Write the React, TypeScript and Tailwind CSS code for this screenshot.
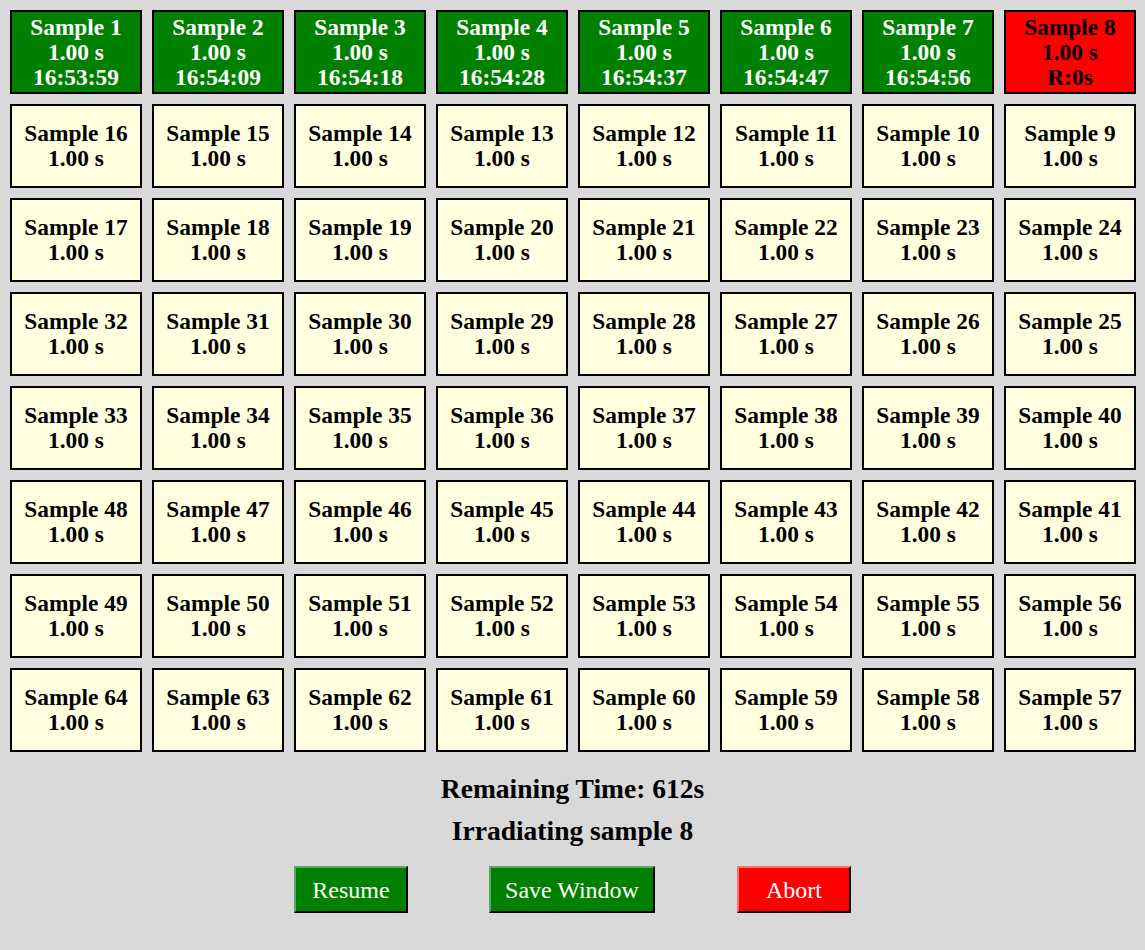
const ORDER: number[][] = [
  [1, 2, 3, 4, 5, 6, 7, 8],
  [16, 15, 14, 13, 12, 11, 10, 9],
  [17, 18, 19, 20, 21, 22, 23, 24],
  [32, 31, 30, 29, 28, 27, 26, 25],
  [33, 34, 35, 36, 37, 38, 39, 40],
  [48, 47, 46, 45, 44, 43, 42, 41],
  [49, 50, 51, 52, 53, 54, 55, 56],
  [64, 63, 62, 61, 60, 59, 58, 57],
];

const DONE: Record<number, string> = {
  1: "16:53:59",
  2: "16:54:09",
  3: "16:54:18",
  4: "16:54:28",
  5: "16:54:37",
  6: "16:54:47",
  7: "16:54:56",
};

const CURRENT = 8;

function Cell({ n }: { n: number }) {
  const done = DONE[n];
  const active = n === CURRENT;
  const color = done
    ? "bg-[#008000] text-white"
    : active
    ? "bg-[#ff0000] text-black"
    : "bg-[#ffffe0] text-black";
  return (
    <div
      className={`flex h-[84px] flex-col items-center justify-center border-2 border-black text-center text-[23.4px] font-bold leading-[25px] ${color}`}
    >
      <div>Sample {n}</div>
      <div>1.00 s</div>
      {done && <div>{done}</div>}
      {active && <div>R:0s</div>}
    </div>
  );
}

export default function App() {
  return (
    <div
      className="min-h-[950px] w-full bg-[#d9d9d9] p-[10px]"
      style={{ fontFamily: '"Liberation Serif", "Times New Roman", serif' }}
    >
      <div className="grid w-[1126px] grid-cols-8 gap-[10px]">
        {ORDER.flat().map((n) => (
          <Cell key={n} n={n} />
        ))}
      </div>

      <div className="mt-[21px] flex w-[1125px] flex-col items-center text-black">
        <div className="text-[27.5px] font-bold leading-[32px]">Remaining Time: 612s</div>
        <div className="mt-[10px] text-[27.5px] font-bold leading-[32px]">Irradiating sample 8</div>
        <div className="mt-[19px] flex items-center">
          <button className="h-[47px] w-[114px] border-2 border-t-[#5aa85a] border-l-[#5aa85a] border-r-black border-b-black bg-[#008000] text-[24px] text-white">
            Resume
          </button>
          <button className="ml-[81px] h-[47px] w-[166px] border-2 border-t-[#5aa85a] border-l-[#5aa85a] border-r-black border-b-black bg-[#008000] text-[24px] text-white">
            Save Window
          </button>
          <button className="ml-[82px] h-[47px] w-[114px] border-2 border-t-[#ff7070] border-l-[#ff7070] border-r-black border-b-black bg-[#ff0000] text-[24px] text-white">
            Abort
          </button>
        </div>
      </div>
    </div>
  );
}
